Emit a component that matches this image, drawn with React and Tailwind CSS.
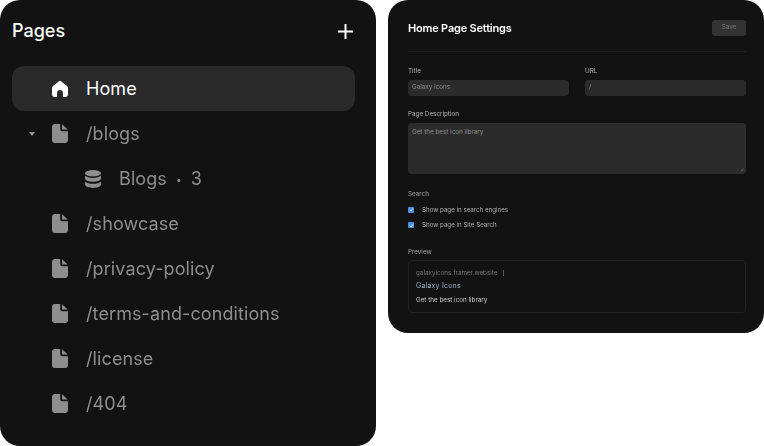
import React from "react";

const FileIcon = () => (
  <svg width="16" height="19" viewBox="0 0 16 19" className="shrink-0">
    <path fill="#8f8f8f" d="M3 0H8.2V5.2C8.2 6.3 9.1 7.2 10.2 7.2H16V16C16 17.7 14.7 19 13 19H3C1.3 19 0 17.7 0 16V3C0 1.3 1.3 0 3 0Z" />
    <path fill="#8f8f8f" d="M10 0.3L15.7 5.6H10.6C10.3 5.6 10 5.3 10 5Z" />
  </svg>
);

const HomeIcon = () => (
  <svg width="16" height="16" viewBox="0 0 16 16" className="shrink-0">
    <path fill="#ffffff" d="M6.7 0.5C7.5 -0.1 8.5 -0.1 9.3 0.5L15 5C15.6 5.5 16 6.2 16 7V13.5C16 14.9 14.9 16 13.5 16H11V12C11 10.3 9.7 9 8 9C6.3 9 5 10.3 5 12V16H2.5C1.1 16 0 14.9 0 13.5V7C0 6.2 0.4 5.5 1 5Z" />
  </svg>
);

const DbIcon = () => (
  <svg width="16" height="18" viewBox="0 0 16 18" className="shrink-0">
    <ellipse cx="8" cy="3.2" rx="8" ry="3.2" fill="#8f8f8f" />
    <path fill="#8f8f8f" d="M0 5.6C1.6 7.2 4.6 8 8 8C11.4 8 14.4 7.2 16 5.6V8.6C16 10.4 12.4 11.8 8 11.8C3.6 11.8 0 10.4 0 8.6Z" />
    <path fill="#8f8f8f" d="M0 11.4C1.6 13 4.6 13.8 8 13.8C11.4 13.8 14.4 13 16 11.4V14.6C16 16.5 12.4 18 8 18C3.6 18 0 16.5 0 14.6Z" />
  </svg>
);

const Row = ({ icon, label, active, caret, indent }) => (
  <div className={`flex h-[45px] items-center rounded-[12px] ${active ? "bg-[#2b2b2b] text-white" : "text-[#8f8f8f]"}`}>
    <div className="flex w-[40px] shrink-0 items-center justify-center">
      {caret && <div className="h-0 w-0 border-x-[3.5px] border-t-[4px] border-x-transparent border-t-[#999999]" />}
    </div>
    <div className={`flex items-center ${indent ? "ml-[33px] gap-[18px]" : "gap-[18px]"}`}>
      {icon}
      <span className="-translate-y-[0.5px] text-[18px] leading-[24px] tracking-[0.1px]">{label}</span>
    </div>
  </div>
);

const FieldLabel = ({ children }) => (
  <div className="text-[6.3px] leading-[10px] text-[#b5b5b5]">{children}</div>
);

const Check = () => (
  <div className="flex h-[6px] w-[6px] items-center justify-center rounded-[1px] bg-[#4a90e2]">
    <svg width="5" height="5" viewBox="0 0 6 6"><path d="M1 3.2L2.5 4.6L5 1.6" fill="none" stroke="#fff" strokeWidth="1" /></svg>
  </div>
);

export default function App() {
  return (
    <div className="flex h-[446px] w-[764px] items-start justify-between bg-white font-['Inter',sans-serif]">
      <div className="h-[446px] w-[376px] rounded-[20px] bg-[#121212] px-[12px] pt-[19px]">
        <div className="flex h-[24px] items-center justify-between pr-[11px] opacity-[0.999]">
          <span className="text-[18px] font-medium leading-[24px] text-white">Pages</span>
          <svg width="15" height="15" viewBox="0 0 15 15"><path d="M7.5 0.5V14.5M0.5 7.5H14.5" stroke="#fff" strokeWidth="2" strokeLinecap="round" /></svg>
        </div>
        <div className="mt-[23px] w-[343px] opacity-[0.999]">
          <Row active icon={<HomeIcon />} label="Home" />
          <Row caret icon={<FileIcon />} label="/blogs" />
          <Row indent icon={<DbIcon />} label={<>Blogs<span className="mx-[9px] text-[10px] align-[2px]">•</span>3</>} />
          <Row icon={<FileIcon />} label="/showcase" />
          <Row icon={<FileIcon />} label="/privacy-policy" />
          <Row icon={<FileIcon />} label="/terms-and-conditions" />
          <Row icon={<FileIcon />} label="/license" />
          <Row icon={<FileIcon />} label="/404" />
        </div>
      </div>

      <div className="h-[333px] w-[376px] rounded-[20px] bg-[#121212] pl-[20px] pr-[18px] pt-[20px]">
        <div className="blur-[0.3px]">
          <div className="flex h-[16px] items-center justify-between">
            <span className="text-[11px] font-semibold leading-[16px] tracking-[-0.2px] text-white">Home Page Settings</span>
            <div className="flex h-[16px] w-[34px] items-center justify-center rounded-[3px] bg-[#333333] text-[6.3px] text-[#777777]">Save</div>
          </div>
          <div className="mt-[15px] h-px bg-[#1f1f1f]" />
          <div className="mt-[14px] grid grid-cols-2 gap-x-[16px]">
            <div>
              <FieldLabel>Title</FieldLabel>
              <div className="mt-[4px] flex h-[16px] items-center rounded-[4px] bg-[#2b2b2b] px-[4px] text-[6.3px] text-[#8f8f8f]">Galaxy Icons</div>
            </div>
            <div>
              <FieldLabel>URL</FieldLabel>
              <div className="mt-[4px] flex h-[16px] items-center rounded-[4px] bg-[#2b2b2b] px-[4px] text-[6.3px] text-[#8f8f8f]">/</div>
            </div>
          </div>
          <div className="mt-[13px]">
            <FieldLabel>Page Description</FieldLabel>
            <div className="relative mt-[4px] h-[51px] rounded-[4px] bg-[#2b2b2b] px-[4px] pt-[4px] text-[6.3px] leading-[10px] text-[#8f8f8f]">
              Get the best icon library
              <svg width="4" height="4" viewBox="0 0 4 4" className="absolute bottom-[2px] right-[2px]"><path d="M0.5 3.5L3.5 0.5M2 3.5L3.5 2" stroke="#777" strokeWidth="0.6" /></svg>
            </div>
          </div>
          <div className="mt-[14.5px]">
            <div className="text-[6.3px] leading-[10px] text-[#a0a0a0]">Search</div>
            <div className="mt-[6px] flex h-[10px] items-center gap-[8px] text-[6.2px] text-[#b0b0b0]"><Check />Show page in search engines</div>
            <div className="mt-[5.5px] flex h-[10px] items-center gap-[8px] text-[6.2px] text-[#b0b0b0]"><Check />Show page in Site Search</div>
          </div>
          <div className="mt-[16.5px]">
            <div className="text-[6.3px] leading-[10px] text-[#a0a0a0]">Preview</div>
            <div className="mt-[3px] h-[53px] rounded-[4px] border border-[#222222] px-[7px] pt-[7px]">
              <div className="flex items-center gap-[5px] text-[6.3px] leading-[10px] text-[#777777]">galaxyicons.framer.website<span className="h-[6px] w-px bg-[#555555]" /></div>
              <div className="mt-[3px] text-[7px] leading-[10px] tracking-[0.2px] text-[#9db4cf]">Galaxy Icons</div>
              <div className="mt-[4px] text-[6.3px] leading-[10px] text-[#cfcfcf]">Get the best icon library</div>
            </div>
          </div>
        </div>
      </div>
    </div>
  );
}
